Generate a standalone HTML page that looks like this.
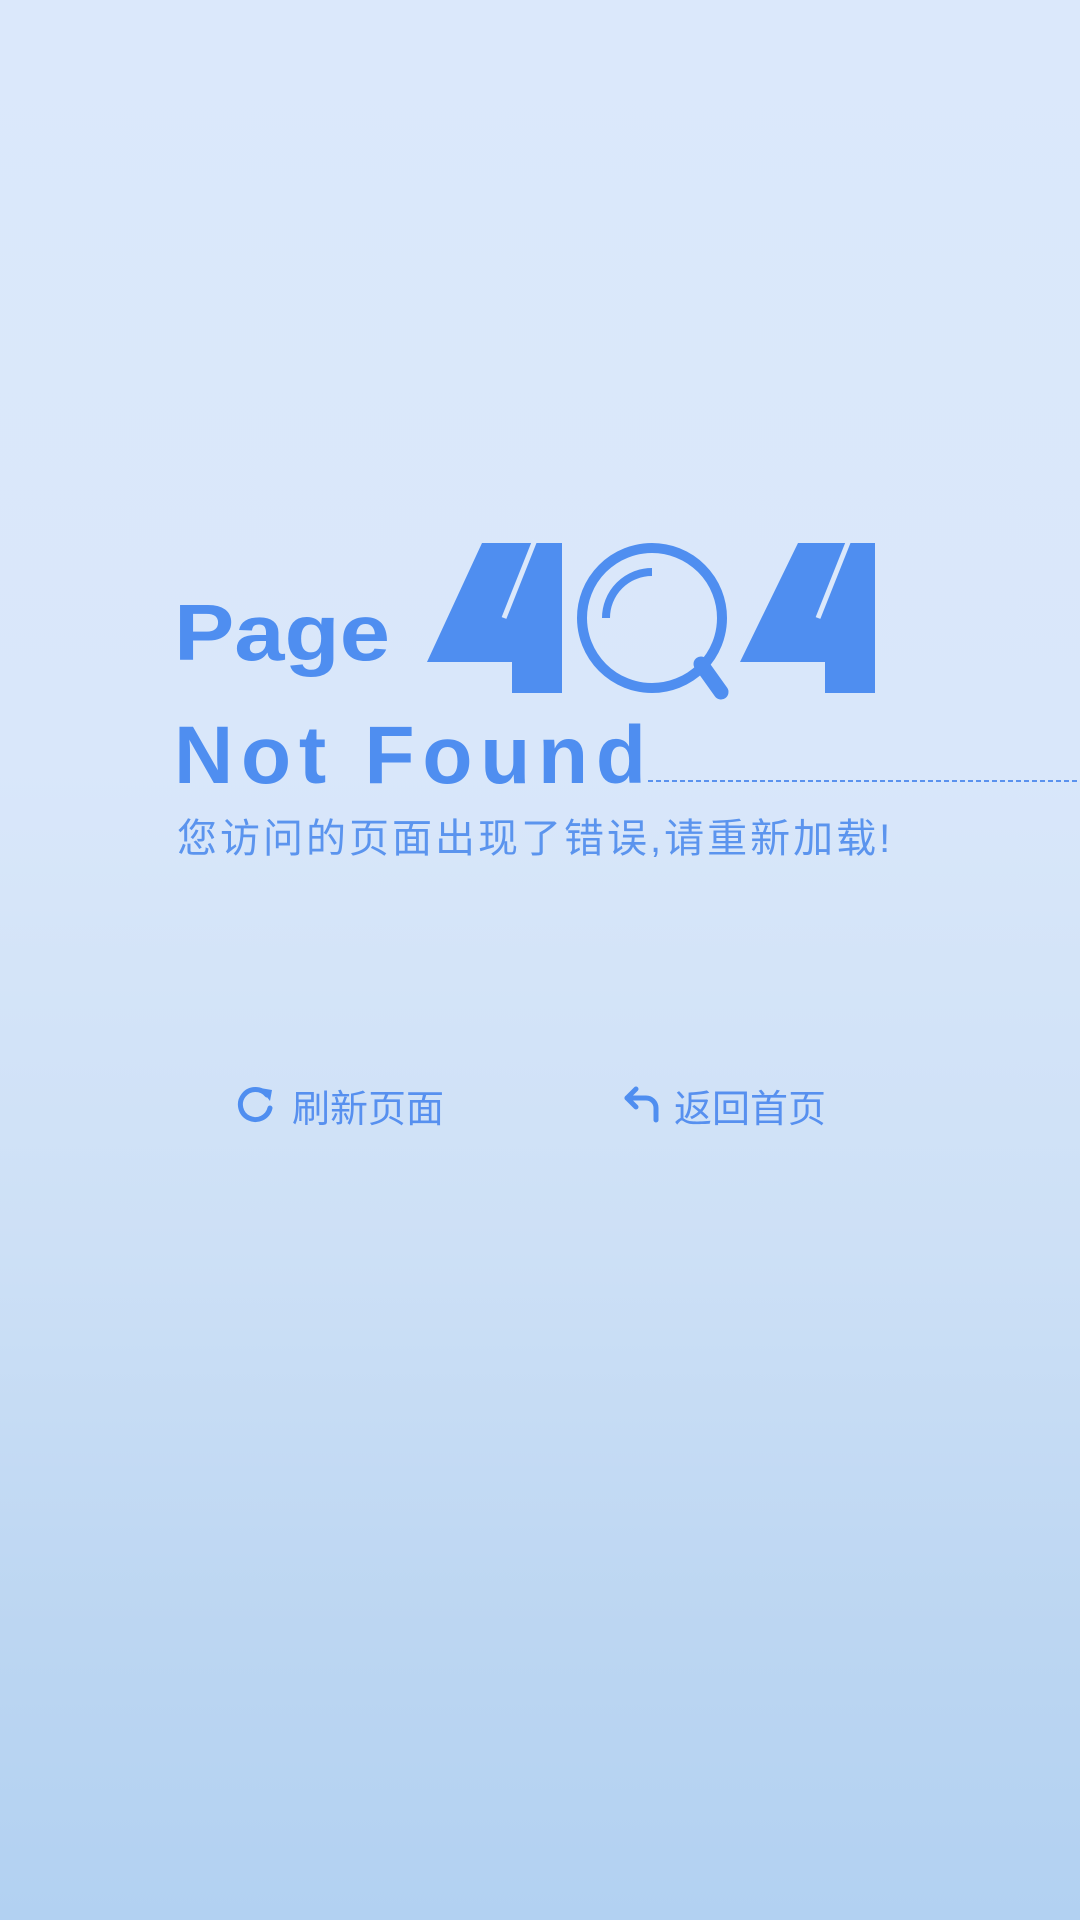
<!DOCTYPE html>
<html><head><meta charset="utf-8"><style>
html,body{margin:0;padding:0}
body{width:1080px;height:1920px;overflow:hidden;background:linear-gradient(180deg,#dbe8fb 0%,#d9e7fa 40%,#cde0f6 65%,#bcd6f2 85%,#b2d1f2 100%);position:relative;font-family:"Liberation Sans","Noto Sans CJK SC",sans-serif}
.t{position:absolute;color:#5790ef;white-space:nowrap}
</style></head><body>
<svg width="1080" height="900" style="position:absolute;left:0;top:0">
<text x="174" y="660" font-family="Liberation Sans,sans-serif" font-weight="bold" font-size="80" fill="#4f8ef0" textLength="216" lengthAdjust="spacingAndGlyphs">Page</text>
<text x="174" y="783" font-family="Liberation Sans,sans-serif" font-weight="bold" font-size="82" fill="#4f8ef0" textLength="472" lengthAdjust="spacing">Not Found</text>
<line x1="648" y1="781" x2="1080" y2="781" stroke="#5a92ee" stroke-width="2" stroke-dasharray="5,3"/>
<polygon points="482,543 562,543 562,693 512,693 512,662 427,662" fill="#4f8ef0"/>
<line x1="535" y1="540" x2="504" y2="618" stroke="#dbe8fb" stroke-width="5"/>
<polygon points="798,543 875,543 875,693 825,693 825,662 740,662" fill="#4f8ef0"/>
<line x1="849" y1="540" x2="818" y2="618" stroke="#dbe8fb" stroke-width="5"/>
<circle cx="652" cy="618" r="70" fill="none" stroke="#4f8ef0" stroke-width="10"/>
<path d="M606 618 A46 46 0 0 1 652 572" fill="none" stroke="#4f8ef0" stroke-width="8"/>
<line x1="701" y1="664" x2="721" y2="692" stroke="#4f8ef0" stroke-width="15" stroke-linecap="round"/>
</svg>
<div class="t" style="left:177px;top:806px;font-size:40px;letter-spacing:3px;color:#5b94ee">您访问的页面出现了错误,请重新加载!</div>
<svg width="40" height="40" style="position:absolute;left:236px;top:1084px" viewBox="0 0 40 40">
<path d="M31 11 A15 15 0 1 0 34 24" fill="none" stroke="#4f8ef0" stroke-width="5" stroke-linecap="round"/>
<polygon points="24,4 36,6 34,17" fill="#4f8ef0"/>
</svg>
<div class="t" style="left:292px;top:1078px;font-size:38px">刷新页面</div>
<svg width="40" height="40" style="position:absolute;left:622px;top:1084px" viewBox="0 0 40 40">
<path d="M5 14 H24 A10 10 0 0 1 34 24 V36" fill="none" stroke="#4f8ef0" stroke-width="5" stroke-linecap="round"/>
<path d="M14 5 L5 14 L14 23" fill="none" stroke="#4f8ef0" stroke-width="5" stroke-linecap="round" stroke-linejoin="round"/>
</svg>
<div class="t" style="left:674px;top:1078px;font-size:38px">返回首页</div>
</body></html>
